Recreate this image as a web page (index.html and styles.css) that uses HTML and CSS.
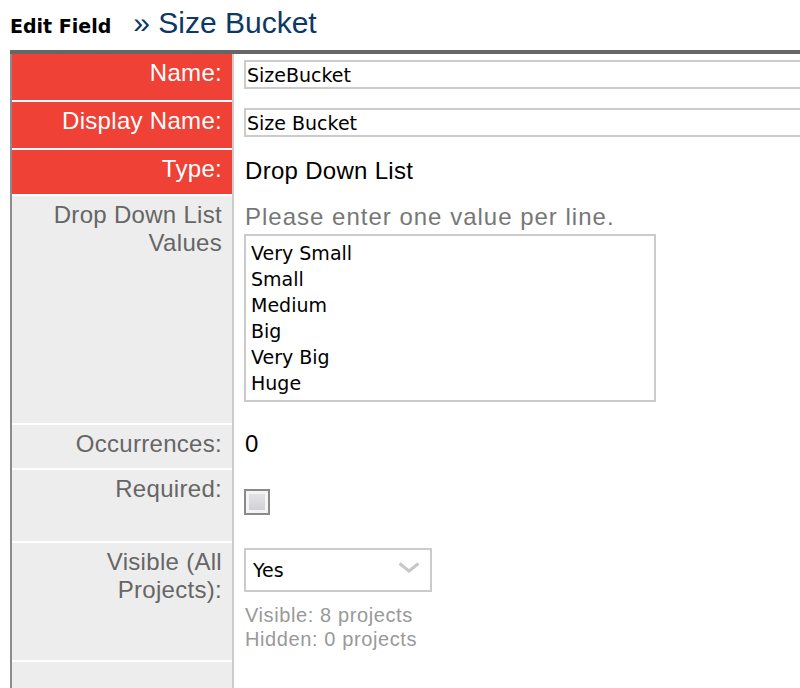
FILE: index.html
```html
<!DOCTYPE html>
<html>
<head>
<meta charset="utf-8">
<title>Edit Field</title>
<link rel="stylesheet" href="styles.css">
</head>
<body>
<div class="page">
  <h1 class="title">
    <span class="crumb">Edit Field</span>
    <span class="field-name">» Size Bucket</span>
  </h1>
  <div class="form">
    <div class="row r-name is-key">
      <div class="label"><div class="label-in">Name:</div></div>
      <div class="value"><input class="text" type="text" value="SizeBucket"></div>
    </div>
    <div class="row r-display is-key">
      <div class="label"><div class="label-in">Display Name:</div></div>
      <div class="value"><input class="text" type="text" value="Size Bucket"></div>
    </div>
    <div class="row r-type is-key">
      <div class="label"><div class="label-in">Type:</div></div>
      <div class="value"><div class="plain">Drop Down List</div></div>
    </div>
    <div class="row r-ddl">
      <div class="label"><div class="label-in">Drop Down List Values</div></div>
      <div class="value">
        <div class="plain hint">Please enter one value per line.</div>
        <textarea class="values">Very Small
Small
Medium
Big
Very Big
Huge</textarea>
      </div>
    </div>
    <div class="row r-occ">
      <div class="label"><div class="label-in">Occurrences:</div></div>
      <div class="value"><div class="plain">0</div></div>
    </div>
    <div class="row r-req">
      <div class="label"><div class="label-in">Required:</div></div>
      <div class="value"><input class="check" type="checkbox"></div>
    </div>
    <div class="row r-vis">
      <div class="label"><div class="label-in">Visible (All Projects):</div></div>
      <div class="value">
        <div class="select-wrap">
          <select class="select"><option>Yes</option><option>No</option></select>
          <svg class="chevron" width="22" height="11" viewBox="0 0 22 11"><path d="M1.5 1.5 L11 9 L20.5 1.5" fill="none" stroke="#c8c8c8" stroke-width="3"/></svg>
        </div>
        <div class="vis-note">Visible: 8 projects<br>Hidden: 0 projects</div>
      </div>
    </div>
    <div class="row r-last">
      <div class="label"><div class="label-in"></div></div>
      <div class="value"></div>
    </div>
  </div>
</div>
</body>
</html>
```
FILE: styles.css
```css
html, body {
  margin: 0;
  padding: 0;
  background: #fff;
  overflow: hidden;
}
.page {
  padding-left: 10px;
  width: 790px;
}
.title {
  margin: 0;
  height: 50px;
  box-sizing: border-box;
  padding-top: 5px;
  display: flex;
  align-items: baseline;
  line-height: 36px;
  font-weight: normal;
}
.crumb {
  font-family: "DejaVu Sans", sans-serif;
  font-weight: bold;
  font-size: 19px;
  color: #000;
  margin-right: 22px;
}
.field-name {
  font-family: "Liberation Sans", sans-serif;
  font-size: 30px;
  color: #0c3866;
}
.form {
  border-top: 4px solid #666;
}
.row {
  display: flex;
}
.label {
  flex: 0 0 220px;
  border-left: 2px solid #8c8c8c;
  border-right: 2px solid #cbcbcb;
  padding-bottom: 2px;
  background: #fff;
  display: flex;
  flex-direction: column;
}
.label-in {
  flex: 1;
  background: #ededed;
  color: #666;
  text-align: right;
  padding: 5px 10px 0 20px;
  font-family: "Liberation Sans", sans-serif;
  font-size: 24px;
  line-height: 28px;
  letter-spacing: 0.3px;
}
.is-key .label-in {
  background: #ef4136;
  color: #fff;
}
.value {
  flex: 1;
  padding: 6px 0 0 10px;
  min-width: 0;
  overflow: hidden;
}
.r-name { height: 48px; }
.r-display { height: 48px; }
.r-type { height: 46px; }
.r-ddl { height: 229px; }
.r-occ { height: 45px; }
.r-req { height: 73px; }
.r-vis { height: 119px; }
.r-last { height: 40px; }

.text {
  display: block;
  width: 600px;
  height: 29px;
  box-sizing: border-box;
  margin: 0;
  border: 2px solid #cbcbcb;
  padding: 0 1px;
  font-family: "DejaVu Sans", sans-serif;
  font-size: 19px;
  color: #000;
  background: #fff;
  outline: none;
}
.plain {
  font-family: "Liberation Sans", sans-serif;
  font-size: 24px;
  line-height: 28px;
  color: #000;
  padding-left: 1px;
  letter-spacing: 0.3px;
  white-space: nowrap;
}
.r-type .value, .r-ddl .value { padding-top: 7px; }
.r-occ .value { padding-top: 5px; }
.hint {
  color: #777;
  letter-spacing: 1px;
}
.values {
  display: block;
  margin: 3px 0 0 0;
  width: 412px;
  height: 168px;
  box-sizing: border-box;
  border: 2px solid #cbcbcb;
  padding: 4px 5px;
  font-family: "DejaVu Sans", sans-serif;
  font-size: 19px;
  line-height: 26px;
  color: #000;
  resize: none;
  overflow: hidden;
  outline: none;
}
.check {
  -webkit-appearance: none;
  appearance: none;
  display: block;
  margin: 13px 0 0 0;
  width: 26px;
  height: 26px;
  box-sizing: border-box;
  border: 2px solid #8a8a8a;
  padding: 2px;
  background: linear-gradient(#e4e4e8, #cfd0d4) content-box, #fdfdfd;
  box-shadow: inset 0 0 0 3px #f4f4f4;
}
.r-vis .value { padding-top: 5px; }
.select-wrap {
  position: relative;
  width: 188px;
}
.select {
  -webkit-appearance: none;
  appearance: none;
  display: block;
  width: 188px;
  height: 44px;
  box-sizing: border-box;
  margin: 0;
  border: 2px solid #cbcbcb;
  border-radius: 0;
  background: #fff;
  padding: 0 0 0 7px;
  font-family: "DejaVu Sans", sans-serif;
  font-size: 19px;
  color: #000;
  outline: none;
}
.chevron {
  position: absolute;
  right: 12px;
  top: 14px;
}
.vis-note {
  margin-top: 11px;
  font-family: "Liberation Sans", sans-serif;
  font-size: 20px;
  line-height: 24px;
  color: #999;
  padding-left: 1px;
  letter-spacing: 0.6px;
}
```
